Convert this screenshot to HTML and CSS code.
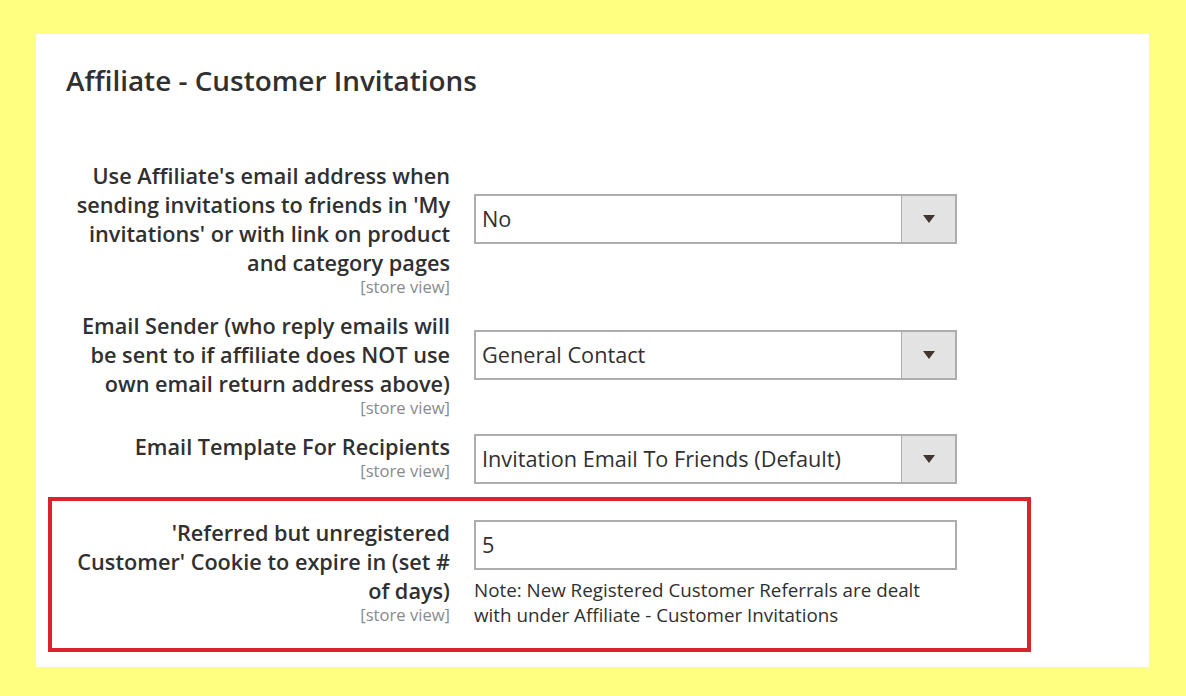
FILE: index.html
```html
<!DOCTYPE html>
<html lang="en">
<head>
<meta charset="utf-8">
<title>Affiliate - Customer Invitations</title>
<link rel="stylesheet" href="styles.css">
</head>
<body>
<div class="panel">
  <h2 class="title">Affiliate - Customer Invitations</h2>
  <div class="rows">
    <div class="row">
      <div class="label">
        <div class="label-text">Use Affiliate's email address when sending invitations to friends in 'My invitations' or with link on product and category pages</div>
        <div class="scope">[store view]</div>
      </div>
      <div class="control offset-lg">
        <div class="select"><span class="select-value">No</span><span class="select-btn"><span class="arrow"></span></span></div>
      </div>
    </div>
    <div class="row">
      <div class="label">
        <div class="label-text">Email Sender (who reply emails will be sent to if affiliate does NOT use own email return address above)</div>
        <div class="scope">[store view]</div>
      </div>
      <div class="control offset-md">
        <div class="select"><span class="select-value">General Contact</span><span class="select-btn"><span class="arrow"></span></span></div>
      </div>
    </div>
    <div class="row">
      <div class="label">
        <div class="label-text">Email Template For Recipients</div>
        <div class="scope">[store view]</div>
      </div>
      <div class="control offset-sm">
        <div class="select"><span class="select-value">Invitation Email To Friends (Default)</span><span class="select-btn"><span class="arrow"></span></span></div>
      </div>
    </div>
  </div>
  <div class="highlight">
    <div class="row">
      <div class="label">
        <div class="label-text">'Referred but unregistered Customer' Cookie to expire in (set # of days)</div>
        <div class="scope">[store view]</div>
      </div>
      <div class="control offset-sm">
        <div class="input">5</div>
        <div class="note">Note: New Registered Customer Referrals are dealt with under Affiliate - Customer Invitations</div>
      </div>
    </div>
  </div>
</div>
</body>
</html>
```

FILE: styles.css
```css
html, body {
  margin: 0;
  padding: 0;
}
body {
  background: #ffff80;
  font-family: "Open Sans", "Liberation Sans", sans-serif;
  color: #303030;
  width: 1186px;
  height: 696px;
  overflow: hidden;
}
.panel {
  box-sizing: border-box;
  margin: 34px 0 0 36px;
  width: 1113px;
  height: 633px;
  background: #fff;
  padding: 29px 0 0 12px;
}
.title {
  margin: 0 0 0 18px;
  font-size: 27.9px;
  font-weight: 600;
  line-height: 34px;
  color: #303030;
}
.rows {
  margin-top: 64px;
  display: flex;
  flex-direction: column;
  gap: 15px;
  padding-left: 4px;
}
.row {
  display: flex;
  align-items: flex-start;
  gap: 24px;
}
.label {
  width: 398px;
  display: flex;
  flex-direction: column;
  align-items: flex-end;
  text-align: right;
}
.label-text {
  width: 377px;
  font-size: 21.7px;
  font-weight: 600;
  line-height: 29px;
}
.scope {
  font-size: 16.6px;
  line-height: 19px;
  color: #8a8a8a;
}
.control {
  width: 483px;
}
.offset-lg { margin-top: 32.5px; }
.offset-md { margin-top: 18.5px; }
.offset-sm { margin-top: 1.5px; }
.select, .input {
  box-sizing: border-box;
  width: 483px;
  height: 50px;
  border: 2px solid #adadad;
  background: #fff;
  display: flex;
  align-items: center;
  font-size: 21.7px;
  color: #303030;
}
.select-value {
  flex: 1;
  padding-left: 6px;
}
.input {
  padding-left: 6px;
}
.select-btn {
  align-self: stretch;
  width: 53px;
  border-left: 1px solid #adadad;
  background: #e3e3e3;
  display: flex;
  align-items: center;
  justify-content: center;
}
.arrow {
  width: 0;
  height: 0;
  border-left: 6px solid transparent;
  border-right: 6px solid transparent;
  border-top: 8px solid #41362f;
  margin-top: 1px;
}
.highlight {
  box-sizing: border-box;
  margin-top: 13px;
  width: 983px;
  height: 155px;
  border: 4px solid #d9232d;
  padding-top: 17.5px;
}
.note {
  margin-top: 8.5px;
  font-size: 18.8px;
  line-height: 25px;
  color: #303030;
}
```
